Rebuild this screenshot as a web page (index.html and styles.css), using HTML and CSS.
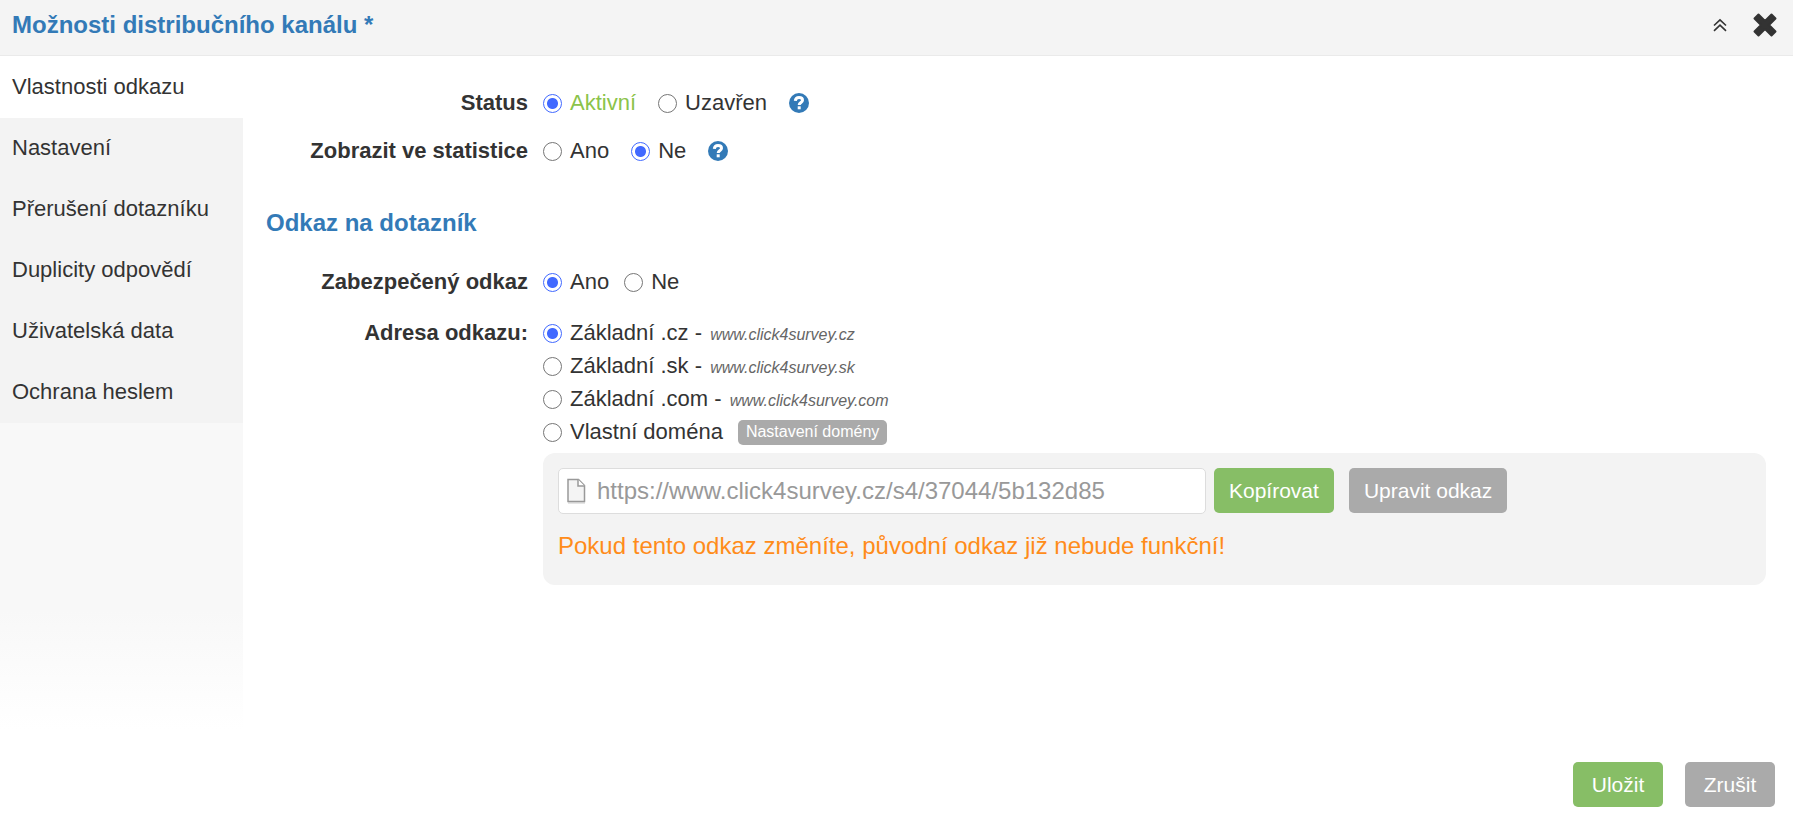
FILE: index.html
```html
<!DOCTYPE html>
<html lang="cs">

<head>
    <meta charset="UTF-8">
    <meta name="viewport" content="width=device-width, initial-scale=1.0">
    <title>Možnosti distribučního kanálu</title>
    <link rel="stylesheet" href="styles.css">
</head>

<body>
    <div class="dialog">
        <header class="header">
            <h1 class="title">Možnosti distribučního kanálu *</h1>
            <button type="button" class="icon-btn" aria-label="Sbalit">
                <svg width="14" height="14" viewBox="0 0 14 14" fill="none" stroke="#333" stroke-width="1.6">
                    <path d="M1 7.5L7 1.8l6 5.7M1 12.8l6-5.7 6 5.7" />
                </svg>
            </button>
            <button type="button" class="icon-btn" aria-label="Zavřít">
                <svg width="24" height="24" viewBox="0 0 24 24" fill="#333" stroke="#333" stroke-width="2" stroke-linejoin="round">
                    <path d="M5.500 1.500L12 8l6.500-6.500 4 4L16 12l6.500 6.500-4 4L12 16l-6.500 6.500-4-4L8 12 1.500 5.500z" />
                </svg>
            </button>
        </header>
        <div class="body">
            <nav class="sidebar">
                <a class="tab active" href="#">Vlastnosti odkazu</a>
                <a class="tab" href="#">Nastavení</a>
                <a class="tab" href="#">Přerušení dotazníku</a>
                <a class="tab" href="#">Duplicity odpovědí</a>
                <a class="tab" href="#">Uživatelská data</a>
                <a class="tab" href="#">Ochrana heslem</a>
            </nav>
            <form class="content" id="channel">
                <div class="row" role="radiogroup" aria-labelledby="l-status">
                    <div class="label" id="l-status">Status</div>
                    <div class="field">
                        <label class="option green"><input type="radio" name="status" checked>Aktivní</label>
                        <label class="option"><input type="radio" name="status">Uzavřen</label>
                        <button type="button" class="icon-btn" aria-label="Nápověda">
                            <svg width="20" height="20" viewBox="0 0 20 20" fill="none">
                                <circle cx="10" cy="10" r="10" fill="#337ab7" />
                                <path d="M6.300 7.800C6.500 5.500 8 4.500 10 4.500c2.200 0 3.500 1.100 3.500 2.700 0 2.300-3.300 2.300-3.300 4.900" stroke="#fff" stroke-width="3" />
                                <path d="M8.700 13.300h3v3h-3z" fill="#fff" />
                            </svg>
                        </button>
                    </div>
                </div>
                <div class="row" role="radiogroup" aria-labelledby="l-stats">
                    <div class="label" id="l-stats">Zobrazit ve statistice</div>
                    <div class="field">
                        <label class="option"><input type="radio" name="stats">Ano</label>
                        <label class="option"><input type="radio" name="stats" checked>Ne</label>
                        <button type="button" class="icon-btn" aria-label="Nápověda">
                            <svg width="20" height="20" viewBox="0 0 20 20" fill="none">
                                <circle cx="10" cy="10" r="10" fill="#337ab7" />
                                <path d="M6.300 7.800C6.500 5.500 8 4.500 10 4.500c2.200 0 3.500 1.100 3.500 2.700 0 2.300-3.300 2.300-3.300 4.900" stroke="#fff" stroke-width="3" />
                                <path d="M8.700 13.300h3v3h-3z" fill="#fff" />
                            </svg>
                        </button>
                    </div>
                </div>

                <h2 class="subtitle">Odkaz na dotazník</h2>

                <div class="row" role="radiogroup" aria-labelledby="l-secure">
                    <div class="label" id="l-secure">Zabezpečený odkaz</div>
                    <div class="field tight">
                        <label class="option"><input type="radio" name="secure" checked>Ano</label>
                        <label class="option"><input type="radio" name="secure">Ne</label>
                    </div>
                </div>
                <div class="row address" role="radiogroup" aria-labelledby="l-address">
                    <div class="label" id="l-address">Adresa odkazu:</div>
                    <div class="stack">
                        <label class="option"><input type="radio" name="domain" checked><span>Základní .cz - <em>www.click4survey.cz</em></span></label>
                        <label class="option"><input type="radio" name="domain"><span>Základní .sk - <em>www.click4survey.sk</em></span></label>
                        <label class="option"><input type="radio" name="domain"><span>Základní .com - <em>www.click4survey.com</em></span></label>
                        <div class="field tight">
                            <label class="option"><input type="radio" name="domain">Vlastní doména</label>
                            <button type="button" class="btn-small">Nastavení domény</button>
                        </div>
                        <div class="panel">
                            <div class="link-line">
                                <div class="url">
                                    <svg width="20" height="26" viewBox="0 0 20 26" fill="none" stroke="#999" stroke-width="1.5">
                                        <path d="M1 25h17" stroke="#ddd" />
                                        <path d="M1 1.500h10.500l6 6V23.500H1z" fill="#f4f4f4" />
                                        <path d="M11 1.500v6.500h6.500" fill="#fff" />
                                    </svg>
                                    <input type="text" aria-label="Odkaz na dotazník" value="https://www.click4survey.cz/s4/37044/5b132d85">
                                </div>
                                <button type="button" class="btn green-btn">Kopírovat</button>
                                <button type="button" class="btn">Upravit odkaz</button>
                            </div>
                            <p class="warning">Pokud tento odkaz změníte, původní odkaz již nebude funkční!</p>
                        </div>
                    </div>
                </div>
            </form>
        </div>
        <footer class="footer">
            <button type="submit" form="channel" class="btn wide green-btn">Uložit</button>
            <button type="button" class="btn wide">Zrušit</button>
        </footer>
    </div>
</body>

</html>
```
FILE: styles.css
```css
* {
    box-sizing: border-box;
}

body {
    margin: 0;
    color: #333;
    background: #fff;
    font: 22px/30px "Liberation Sans", Arial, sans-serif;
}

button,
input {
    margin: 0;
    font-family: inherit;
}

.dialog {
    display: flex;
    flex-direction: column;
    min-height: 100vh;
}

.header {
    display: flex;
    align-items: center;
    gap: 26px;
    height: 56px;
    padding: 0 16px 5px 12px;
    background: #f4f4f4;
    border-bottom: 1px solid #eaeaea;
}

.title,
.subtitle {
    margin: 0;
    color: #337ab7;
    font-size: 24px;
    line-height: 30px;
}

.title {
    flex: 1;
}

.icon-btn {
    display: flex;
    padding: 0;
    border: 0;
    background: none;
}

.body {
    display: flex;
    flex: 1;
}

.sidebar {
    width: 243px;
    flex-shrink: 0;
    background: linear-gradient(#f8f8f8 80%, #fff 97%);
}

.tab {
    display: block;
    padding: 15px 12px 16px;
    background: #f3f3f3;
    color: #333;
    text-decoration: none;
}

.tab.active {
    padding-top: 16px;
    background: #fff;
}

.content {
    flex: 1;
    padding: 32px 27px 0 23px;
}

.row {
    display: flex;
    gap: 15px;
    margin-bottom: 18px;
}

.label {
    width: 262px;
    flex-shrink: 0;
    text-align: right;
    font-weight: bold;
}

.field {
    display: flex;
    align-items: center;
    gap: 22px;
}

.field.tight {
    gap: 15px;
}

.subtitle {
    margin: 42px 0 29px;
}

.option {
    display: flex;
    align-items: center;
    gap: 8px;
}

.option.green {
    color: #8bc34a;
}

.option input {
    width: 19px;
    height: 19px;
    appearance: none;
    border: 1px solid #767676;
    border-radius: 50%;
    background: #fff;
}

.option input:checked {
    border-color: #4169ff;
    background: radial-gradient(circle, #4169ff 5px, #fff 6px);
}

.option em {
    margin-left: 2px;
    color: #666;
    font-size: 16px;
    line-height: 20px;
}

.row.address {
    margin-top: 21px;
}

.stack {
    display: flex;
    flex-direction: column;
    gap: 3px;
    flex: 1;
}

.btn-small {
    height: 25px;
    padding: 0 8px;
    border: 0;
    border-radius: 5px;
    background: #aaa;
    color: #fff;
    font-size: 16px;
}

.panel {
    margin-top: 3px;
    padding: 15px 15px 24px;
    border-radius: 12px;
    background: #f3f3f3;
}

.link-line {
    display: flex;
    gap: 15px;
    margin-bottom: 17px;
}

.url {
    display: flex;
    align-items: center;
    gap: 10px;
    width: 648px;
    height: 46px;
    margin-right: -7px;
    padding: 0 8px;
    border: 1px solid #ddd;
    border-radius: 5px;
    background: #fff;
}

.url input {
    flex: 1;
    padding: 0;
    border: 0;
    outline: 0;
    color: #999;
    font-size: 24px;
}

.btn {
    height: 45px;
    padding: 0 15px;
    border: 0;
    border-radius: 5px;
    background: #aaa;
    color: #fff;
    font-size: 21px;
}

.btn.wide {
    width: 90px;
}

.btn.green-btn {
    background: #87be66;
}

.warning {
    margin: 0;
    color: #ff8c1a;
    font-size: 24px;
}

.footer {
    display: flex;
    justify-content: flex-end;
    gap: 22px;
    padding: 12px 18px;
}
```
